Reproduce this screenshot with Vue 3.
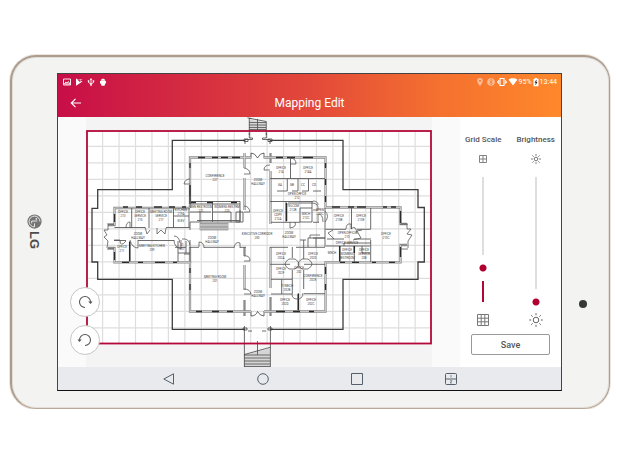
<script setup>
import { ref } from 'vue'

const gridScale = ref(30)
const brightness = ref(0)

const gridX = Array.from({ length: 20 }, (_, i) => 102.6 + i * 16.45)
const gridY = Array.from({ length: 12 }, (_, i) => 146.4 + i * 16.5)

const rooms = [
  [123, 213, 'OFFICE', '213'],
  [140, 213, 'OFFICE', 'SERVICE', '215'],
  [161, 213, 'MEETING ROOM', 'SERVICE', '217'],
  [181, 211, 'KITCHEN', '219A'],
  [181, 222, 'ELEV'],
  [138, 235, 'ZOOM', 'HALLWAY'],
  [122, 248, 'OFFICE', '211'],
  [152, 247, 'MEETING KITCHEN', '209'],
  [182, 246, 'ST.', '207'],
  [215, 177, 'CONFERENCE', '227'],
  [201, 208, 'MEN RESTROOM', '221'],
  [227, 208, 'WOMENS RESTRM', '223'],
  [212, 239, 'ZOOM', 'HALLWAY'],
  [258, 181, 'ZOOM', 'HALLWAY'],
  [257, 235, 'EXECUTIVE CORRIDOR', '200'],
  [289, 234, 'ZOOM', 'HALLWAY'],
  [215, 278, 'MEETING ROOM', '201'],
  [258, 293, 'ZOOM', 'HALLWAY'],
  [281, 169, 'OFFICE', '214'],
  [308, 169, 'OFFICE', '214A'],
  [280, 186, 'GA'],
  [292, 186, 'GB'],
  [303, 186, 'CC'],
  [314, 186, 'CD'],
  [297, 195, 'OPEN OFFICE', '212'],
  [278, 212, 'OFFICE', 'COPY', '212A'],
  [293, 207, 'TELCOM', '212B'],
  [306, 215, 'MECH', '212C'],
  [320, 211, 'OPEN', '210C'],
  [339, 217, 'OFFICE', '210B'],
  [361, 217, 'OFFICE', '210E'],
  [386, 235, 'OFFICE', '210C'],
  [347, 234, 'OPEN OFFICE', '210'],
  [347, 244, 'OFFICE SERVICE'],
  [332, 254, 'MECH'],
  [347, 251, 'OFFICE', 'WOMENS', 'RESTROOM'],
  [364, 251, 'OFFICE', 'SERVICE', '208'],
  [281, 255, 'OFFICE', '202A'],
  [281, 270, 'OFFICE', '202F'],
  [299, 269, 'OFFICE', '202'],
  [313, 255, 'OFFICE', '202D'],
  [313, 277, 'CONFERENCE', '202E'],
  [287, 287, 'IT/MECH', '202B'],
  [285, 301, 'OFFICE', '202D'],
  [311, 301, 'OFFICE', '202C'],
]
</script>

<template>
  <main class="tablet">
    <div class="bezel brand">
      <svg class="brand-mark" viewBox="0 0 16 16" aria-hidden="true">
        <circle cx="8" cy="8" r="7.6" fill="#747474" />
        <path d="M8 2.2a5.8 5.8 0 1 0 5.8 5.8H10M7.500 5v6H10" fill="none" stroke="#eee" stroke-width="1" />
        <circle cx="5.200" cy="6" r=".9" fill="#eee" />
      </svg>
      <span class="brand-name">LG</span>
    </div>

    <section class="screen">
      <header class="appbar">
        <div class="status">
          <div class="status-left">
            <svg viewBox="0 0 8 8"><path d="M.5 1h7v6h-7zM1.4 6l1.5-2 1.2 1.2L5.4 3.500 6.800 6z" fill="none" stroke="#fff" stroke-width=".9" /></svg>
            <svg viewBox="0 0 8 8"><path d="M1 .5 7.500 3.600 1 7.800zM3 2l1.500 1.600L7.500 1" fill="#fff" /><path d="M2.500.8 4.700 3.600 7.500 1.600" fill="none" stroke="#d01e45" stroke-width=".7" /></svg>
            <svg viewBox="0 0 8 8"><path d="M4 1v6M1.500 3v1.500L4 6l2.500-1.500V3" fill="none" stroke="#fff" stroke-width=".9" /><path d="m4 0 1.300 1.700H2.700zM.8 2.300h1.500v1.500H.8zM5.700 2.300h1.500v1.500H5.700zM3.200 6.300h1.600v1.500H3.200z" fill="#fff" /></svg>
            <svg viewBox="0 0 8 8"><path d="M1.700 2.800C2 1 3 .7 4 .7s2 .3 2.300 2.100zM1 3h6v2.500h-.8L5.500 7.700h-3L1.800 5.500H1z" fill="#fff" /></svg>
          </div>
          <div class="status-right">
            <svg class="faded" viewBox="0 0 10 10"><path d="M5 1a2.800 2.800 0 0 0-2.800 2.800C2.200 6 5 9 5 9s2.800-3 2.800-5.200A2.800 2.800 0 0 0 5 1z" fill="#fff" /><circle cx="5" cy="3.800" r="1" fill="#f17b36" /></svg>
            <svg class="faded" viewBox="0 0 10 10"><circle cx="5" cy="5" r="3.800" fill="#fff" /><path d="m3.500 3.500 3 3L5 7.800V2.200l1.500 1.300-3 3" fill="none" stroke="#f47c33" stroke-width=".7" /></svg>
            <svg viewBox="0 0 10 10"><path d="M3 1.500h4v7H3z" fill="none" stroke="#fff" stroke-width="1.200" /><path d="M1.500 3v4M8.500 3v4M.4 4v2M9.600 4v2" stroke="#fff" stroke-width=".8" /></svg>
            <svg viewBox="0 0 10 10"><path d="M.6 2.700C3 .9 7 .9 9.400 2.700L5 8.600z" fill="#fff" /></svg>
            <span>95%</span>
            <svg class="battery" viewBox="0 0 6 10"><path d="M2 1h2v.8h1.500v7.400H.5V1.800H2z" fill="#fff" /><path d="M3.500 2.800 1.800 5.600h1.100L2.500 8 4.200 5H3.100z" fill="#111" stroke="#111" stroke-width=".2" /></svg>
            <span>13:44</span>
          </div>
        </div>
        <div class="titlebar">
          <button class="back" aria-label="Back">
            <svg viewBox="0 0 12 10"><path d="M11 5H1.300M5.500.8 1.300 5l4.200 4.200" fill="none" stroke="#fff" stroke-width="1.200" /></svg>
          </button>
          <h1>Mapping Edit</h1>
        </div>
      </header>

      <div class="workspace">
        <div class="canvas">
          <svg class="plan" viewBox="86 117 346 250" role="img" aria-label="Floor plan">
            <rect x="87" y="131" width="344" height="212" fill="#fff" />
            <g stroke="#dedede" stroke-width="1.200">
              <path v-for="x in gridX" :key="'x' + x" :d="`M${x} 131V343`" />
              <path v-for="y in gridY" :key="'y' + y" :d="`M87 ${y}H431`" />
            </g>

            <!-- site outline -->
            <path d="M245 140.300H172.300V189.600H97.700V208.300H92V262H97.700V279.400H172.300V329.400H245M270 140.300H343V189.600H418V207.500H424.300V262H418V279.400H343V329.400H270" fill="none" stroke="#3c3c3c" stroke-width="1.300" />

            <!-- entrances and stairs -->
            <g fill="none" stroke="#444" stroke-width=".8">
              <path d="M249.300 118.300 266.300 121.500V135M249.300 118.300V135M257.500 119V130M249 122.500H266M249 125H266M249 127.500H266M249 129.500H266M247.500 117.800l4 .8" />
              <path d="M249.300 133V138H252.500V139.500H245V144M266.300 133V138H262.500V139.500H270V144M244 139h4v2.500h-4zM268 139h4v2.500h-4z" />
              <path d="M244.400 326V367M270.400 326V367M244.400 354.500 270.400 347.300M257.500 341V355M244 355H270M244 358H270M244 361H270M244 364H270M244 366.500H270M243 328h4v2h-4zM268 328h4v2h-4zM248 331h4M266 331h-4" />
              <path d="M251 158.500V153Q255 153 257.500 158M264 158.500V153Q260 153 257.500 158M251 311V316Q256 316 257.500 311.500M264 311V316Q260 316 257.500 311.500" />
            </g>
            <path d="M249.500 119.500 266 122.500V130H249.500zM244.600 355 270 348.500V367H244.600z" fill="#777" fill-opacity=".25" />

            <!-- exterior walls -->
            <g fill="none" stroke="#8c8c8c" stroke-width="2.300">
              <path d="M190 208V157.500H251M264 157.500H325.500V207.500H400.500V224H407M190 208H114.500V225H108M108 248H114.500V262.400H190V311.500H251M264 311.500H325.500V262.400H400.500V245H407" />
              <path d="M244.500 153V168M244.500 178V210M244.500 247V256M244.500 265V290M244.500 300V316M270.500 153V163M270.500 171V224M270.500 247V288M270.500 297V316M190 247V263" />
            </g>
            <g fill="none" stroke="#e4e4e4" stroke-width=".7">
              <path d="M190 208V157.500H251M264 157.500H325.500V207.500H400.500V224M190 208H114.500V225M114.500 248V262.400H190V311.500H251M264 311.500H325.500V262.400H400.500V245" />
              <path d="M244.500 153V168M244.500 178V210M244.500 265V290M270.500 171V224M270.500 247V288" />
            </g>
            <g fill="none" stroke="#2b2b2b" stroke-width="1.300">
              <path d="M198 157.500h7M212 157.500h6M221 157.500h7M232 157.500h8M276 157.500h7M287 157.500h8M303 157.500h10M123 207h5M136 207h6M154 207h8M169 207h6M182 207h4M332 207h8M348 207h6M357 207h9M383 207h4M391 207h5M122 262.400h7M138 262.400h5M155 262.400h10M173 262.400h4M340 262.400h5M352 262.400h7M372 262.400h4M389 262.400h6M196 311.500h6M212 311.500h7M227 311.500h6M276 311.500h9M293 311.500h7M309 311.500h5" />
              <path d="M190 163v5M190 196v8M190 268v5M190 284v6M325.500 163v5M325.500 179v6M325.500 196v6M325.500 267v7M325.500 284v6M400.500 211v12M400.500 247v10M114.500 214v8M114.500 252v8" />
            </g>

            <!-- interior walls -->
            <g fill="none" stroke="#5b5b5b" stroke-width=".9">
              <path d="M131.700 208V228M149 208V228M173.500 208V228M114.500 227.500H145M166 227.500H190M174 216H189M189 208V227M129.700 241V262M178 241V262M114 240.500H126M138 240.500H174M178 253H190M186 241V253" />
              <path d="M190 201.500H240V222H190M212.500 202V222M190 204H240M200 222V212M231 212V222M211 212H190M213 212H231M240 210V222M236 212h7v10h-7zM197 220.500H240" />
              <path d="M270 178.500H325M290.500 157.500V178.500M287.300 179V191H277M298 179V191H292M308.500 179V191H302M321 191H313M270 201.500H313M286 201.500V222M271 222.300H300M288 203H312M300 208V222M312 202V222H300M300 208H312M313 222.300H319M325 208V247" />
              <path d="M351.500 208V229M370.700 208V229M325.500 229.300H346M357 229.300H370.700M370.700 240V262M339.700 246V262M354.300 246V262M326 246H370M327 239H344M354 239H371M344 246V243H371M362 246V253H370" />
              <path d="M270 247.300H288M296 247.300H304M270 264.300H290M271 279.300H292M271 294H292M281.700 279.300V294M292.300 247V258M292.300 270V294M298.300 293V311M303.700 240V259M303.700 270V289M304 247.300H325M304 264.300H325M304 293.700H325M300 240H306M313 238H325M308 247V238H325M316 238V247" />
              <path d="M190 247.300H199M204 247.300H234M240 247.300H246M186 247.300H175M190 222V230M190 240V248M184 254H190" />
            </g>
            <g fill="none" stroke="#292929" stroke-width="1.500">
              <path d="M286.500 203V221M298.300 294V310M339.700 246V261M354.300 246V253M129.700 242V261M190 185v11M191 202.500h5M207 202.500h6M231 202.500h6" />
            </g>

            <!-- doors -->
            <g fill="none" stroke="#505050" stroke-width=".75">
              <path d="M190 184h-6Q185 179 190 179M244 174h6Q250 169 244 168M244 212h6Q249 206 244 206M270 170h-6Q264 165 270 165M290 164h6Q296 158 290 158M244 261h6Q250 255 244 256M244 294h7Q250 289 244 289M199 247v-5Q204 242 204 248M240 248v-5Q235 241 234 248M289 259q-8 5 0 10h6q8-5 0-10zM302 259q-8 5 0 10h6q8-5 0-10zM292 294q0 5 5 5M303 293q0 6-6 6M126 228q0-6 4-6v6M145 227l2 7 3-4M157 228v6l4-4 4 4 1-6M114 240h6q0 8 6 1M138 240v8q-6 0-8-8M174 240q0 7 7 9v-9M174 236q5 0 6 7M182 239q7-1 8 6" />
              <path d="M108 225v5h-4l3 5-3 2 4 4-1 7M107 224h7M107 249h7M407 224v5h4l-4 5 5 1-4 6v7M400 224h8M400 249h8M325 222q5-6 0-11M318 222v-8q5 0 5 8M346 229q0-6 5-5v5q5-5 6 5M333 230l-5 3 6 6M362 230l-5 1 4 7-8 2M290 222v6q7-1 5-6M312 203q7 0 6 7h-5M310 238v-3h10M313 201q5 0 5 4" />
            </g>

            <!-- interior stairs -->
            <g fill="none" stroke="#777" stroke-width=".6">
              <rect x="200" y="223.500" width="28" height="6.500" fill="#ddd" />
              <path v-for="n in 13" :key="n" :d="`M${200 + n * 2} 223.500v6.500`" />
              <path d="M200 227H228" />
            </g>

            <text v-for="(r, i) in rooms" :key="i" class="room">
              <tspan v-for="(line, n) in r.slice(2)" :key="n" :x="r[0]" :y="r[1] + n * 4">{{ line }}</tspan>
            </text>

            <rect x="87" y="131" width="344" height="212.500" fill="none" stroke="#b3093a" stroke-width="1.800" />
          </svg>
          <div class="rotate">
            <button aria-label="Rotate clockwise">
              <svg viewBox="0 0 16 16"><path d="M8 13.500A5.500 5.500 0 1 1 13.500 8" fill="none" stroke="#555" stroke-width="1.100" /><path d="M11.200 7.500h4.400l-2 2.400z" fill="#555" /></svg>
            </button>
            <button aria-label="Rotate counterclockwise">
              <svg viewBox="0 0 16 16"><path d="M8 13.500A5.500 5.500 0 1 0 2.500 8" fill="none" stroke="#555" stroke-width="1.100" /><path d="M4.800 7.500H.4l2 2.400z" fill="#555" /></svg>
            </button>
          </div>
        </div>

        <aside class="panel">
          <div class="controls">
            <div class="control">
              <label for="grid-scale">Grid Scale</label>
              <svg class="icon" viewBox="0 0 14 14"><path d="M3.500 3.500h7v7h-7zM7 3.500v7M3.500 7h7" fill="none" stroke="#777" stroke-width=".9" /></svg>
              <input id="grid-scale" v-model="gridScale" type="range" min="0" max="100" :style="{ '--value': gridScale }" />
              <svg class="icon" viewBox="0 0 14 14"><path d="M1.500 1.500h11v11h-11zM5.200 1.500v11M8.800 1.500v11M1.500 5.200h11M1.500 8.800h11" fill="none" stroke="#777" /></svg>
            </div>
            <div class="control">
              <label for="brightness">Brightness</label>
              <svg class="icon" viewBox="0 0 14 14"><circle cx="7" cy="7" r="1.800" fill="none" stroke="#666" stroke-width=".9" /><path d="M7 2v1.800M7 10.200V12M2 7h1.800M10.200 7H12M3.400 3.400l1.300 1.300M9.300 9.300l1.300 1.300M3.400 10.600l1.300-1.300M9.300 4.700l1.300-1.300" stroke="#666" stroke-width=".9" /></svg>
              <input id="brightness" v-model="brightness" type="range" min="0" max="100" :style="{ '--value': brightness }" />
              <svg class="icon" viewBox="0 0 14 14"><circle cx="7" cy="7" r="2.800" fill="none" stroke="#666" /><path d="M7 .2v2M7 11.800v2M.2 7h2M11.800 7h2M2.200 2.200l1.400 1.400M10.400 10.400l1.400 1.400M2.200 11.800l1.400-1.400M10.400 3.600l1.400-1.400" stroke="#666" /></svg>
            </div>
          </div>
          <button class="save">Save</button>
        </aside>
      </div>

      <nav class="navbar" aria-label="System">
        <button aria-label="Back"><svg viewBox="0 0 14 14"><path d="M11.500 1.800v10.400L1.800 7z" fill="none" stroke="#55606c" /></svg></button>
        <button aria-label="Home"><svg viewBox="0 0 14 14"><circle cx="7" cy="7" r="5.300" fill="none" stroke="#55606c" /></svg></button>
        <button aria-label="Recent apps"><svg viewBox="0 0 14 14"><path d="M1.500 1.500h11v11h-11z" fill="none" stroke="#55606c" /></svg></button>
        <button aria-label="Split screen"><svg viewBox="0 0 14 14"><rect x="1.500" y="1.500" width="11" height="11" rx="1" fill="none" stroke="#55606c" /><path d="M1.500 7h11" stroke="#55606c" /><path d="M7 3v2.500M6.200 8.700h1.600L6.300 11h1.600" fill="none" stroke="#55606c" stroke-width=".7" /></svg></button>
      </nav>
    </section>

    <div class="bezel camera-side"><span class="camera"></span></div>
  </main>
</template>

<style>
body {
  background: #fff;
}
</style>

<style scoped>
* {
  box-sizing: border-box;
}

button {
  display: flex;
  align-items: center;
  justify-content: center;
  padding: 0;
  border: 0;
  background: none;
  font: inherit;
}

svg {
  display: block;
}

.tablet {
  display: grid;
  grid-template-columns: 45px 1fr 47px;
  margin: 55px 10px 0;
  padding: 16px 0 17px;
  border: 2px solid #aa9c8e;
  border-right-width: 1px;
  border-bottom: 1px solid #b9a999;
  border-radius: 26px;
  background: #f3f3f1;
  box-shadow: 0 0 0 1px #eee5de, inset 0 0 0 1px #e3ded8;
  font-family: Roboto, "Liberation Sans", sans-serif;
}

.bezel {
  display: flex;
  flex-direction: column;
  align-items: center;
}

.brand {
  padding-top: 141px;
  gap: 2px;
}

.brand-mark {
  width: 15px;
  height: 15px;
  transform: rotate(90deg);
}

.brand-name {
  writing-mode: vertical-rl;
  color: #4c4c4c;
  font: bold 13px/13px "Liberation Sans", sans-serif;
}

.camera-side {
  padding-top: 227px;
  padding-right: 6px;
}

.camera {
  width: 8px;
  height: 8px;
  border-radius: 50%;
  background: #343836;
}

.screen {
  min-width: 0;
  border: 1px solid #444;
  border-bottom-color: #111;
}

.appbar {
  height: 43px;
  background: linear-gradient(90deg, #c70e48, #e2483a 50%, #f4702f 75%, #ff882b);
  color: #fff;
}

.status,
.status-left,
.status-right {
  display: flex;
  align-items: center;
}

.status {
  justify-content: space-between;
  height: 16px;
  padding: 0 4px 0 5px;
  font-size: 7px;
}

.status-left {
  gap: 4px;
}

.status-left svg {
  width: 8px;
  height: 8px;
}

.status-right {
  gap: 1px;
}

.status-right svg {
  width: 10px;
  height: 10px;
}

.status-right .battery {
  width: 6px;
}

.faded {
  opacity: 0.5;
}

.titlebar {
  display: grid;
  grid-template-columns: 36px 1fr 36px;
  align-items: center;
  height: 25px;
}

.back svg {
  width: 12px;
  height: 10px;
}

h1 {
  margin: 0;
  font-size: 12px;
  font-weight: 400;
  line-height: 16px;
  text-align: center;
}

.workspace {
  display: grid;
  grid-template-columns: 1fr 101px;
  background: #fafafa;
}

.canvas {
  position: relative;
  padding: 0 28px;
}

.plan {
  width: 100%;
  height: auto;
  background: #f4f4f4;
}

.room {
  fill: #3c3c3c;
  font-size: 3px;
  font-weight: 400;
  text-anchor: middle;
}

.rotate {
  position: absolute;
  bottom: 12px;
  left: 12px;
  display: grid;
  gap: 8px;
}

.rotate button {
  width: 30px;
  height: 30px;
  border: 1px solid #c6c6c6;
  border-radius: 50%;
  background: #fff;
}

.rotate svg {
  width: 16px;
  height: 16px;
}

.panel {
  display: flex;
  flex-direction: column;
  padding-top: 17px;
  background: #fff;
  color: #555;
}

.controls {
  display: flex;
  justify-content: space-between;
  padding: 0 6px 0 5px;
}

.control {
  display: flex;
  flex-direction: column;
  align-items: center;
  font-size: 8px;
  font-weight: 500;
  line-height: 12px;
  white-space: nowrap;
}

.icon {
  width: 14px;
  height: 14px;
}

.control label {
  margin-bottom: 6px;
}

.control input {
  appearance: none;
  writing-mode: vertical-lr;
  direction: rtl;
  width: 8px;
  height: 138px;
  margin: 11px 0 -2px;
  background: linear-gradient(
      to top,
      transparent 13px,
      #b00535 13px calc(13px + var(--value) * 1.12px),
      #dedede calc(13px + var(--value) * 1.12px)
    ) center / 2px 100% no-repeat;
}

.control input::-webkit-slider-thumb {
  appearance: none;
  width: 8px;
  height: 26px;
  background: radial-gradient(circle, #b00030 3px, #fff 4px);
}

.save {
  height: 21px;
  margin: 7px 11px 0;
  border: 1px solid #999;
  border-radius: 2px;
  background: #fff;
  color: #555;
  font-size: 9px;
  font-weight: 500;
}

.navbar {
  display: flex;
  justify-content: center;
  height: 23px;
  background: #e8eaee;
}

.navbar button {
  width: 94px;
}

.navbar svg {
  width: 14px;
  height: 14px;
}
</style>
